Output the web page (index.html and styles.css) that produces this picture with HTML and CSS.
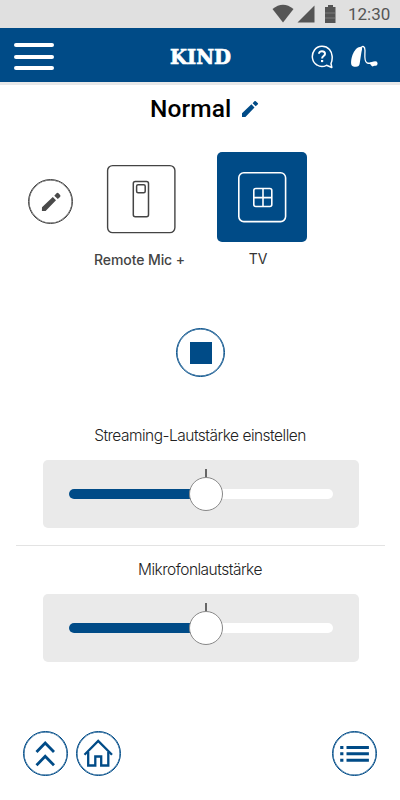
FILE: index.html
```html
<!DOCTYPE html>
<html lang="de">
<head>
    <meta charset="UTF-8">
    <meta name="viewport" content="width=device-width, initial-scale=1.0">
    <title>KIND</title>
    <link rel="stylesheet" href="styles.css">
</head>
<body>
    <div class="status-bar">
        <svg width="66" height="20" viewBox="0 0 66 20" fill="#555">
            <path d="M.5 5Q11 -3.500 21.500 5L11 18.500Z"/>
            <path d="M42.500 1.500V18.500H25.500Z"/>
            <path d="M56 1h5v2h2.500v16h-10.500V3H56Z"/>
            <path d="M53 9h10.500M53 14h10.500" stroke="#999" stroke-width=".6"/>
        </svg>
        <span class="clock">12:30</span>
    </div>
    <header class="header">
        <button class="menu" aria-label="Menü"><span></span><span></span><span></span></button>
        <svg class="logo" width="64" height="30" viewBox="0 0 64 30">
            <text x="1" y="24" textLength="61" lengthAdjust="spacingAndGlyphs">KIND</text>
        </svg>
        <div class="header-icons">
            <svg width="22" height="24" viewBox="0 0 22 24" fill="none" stroke="#fff" stroke-width="1.500" stroke-linejoin="round">
                <path d="M20 18.500C22 14 21.500 8 18.500 4.500C14.500 .2 7 .2 3.500 5C-.2 10 1 17 6 20C9 22 13 21.700 15.500 20.300L20.800 22.500Z"/>
                <path d="M8 8.800C8 5.200 14.200 5.300 14 8.900C13.900 11.100 11.100 11 11.100 13.500" stroke-width="2"/>
                <path d="M11.100 15v2.100" stroke-width="2.200"/>
            </svg>
            <svg width="28" height="24" viewBox="0 0 28 24">
                <path d="M1.300 19.500C.3 13 4.500 1.800 11 1.800C12.800 1.800 12 5 11.300 8L9.700 18.500Q9.200 21.800 6 21.800Q1.800 21.800 1.300 19.500Z" fill="#fff"/>
                <path d="M11 3.200C12.500 0 15 1.500 15 5.500C15 10 13.800 16.500 17 17.800C19 18.700 20.500 18 22.500 18.300" fill="none" stroke="#fff" stroke-width="1.300"/>
                <path d="M20 17.600L23.500 16.500Q27.600 15.500 27.600 18.500Q27.500 21.500 24.500 20.700L22.300 21.500L20.500 19.800Z" fill="#fff"/>
            </svg>
        </div>
    </header>

    <main>
        <div class="title">
            <h1>Normal</h1>
            <svg width="18" height="18" viewBox="0 0 18 18" fill="#004b87">
                <path d="M1 13.300L10.400 4.300L13.500 7.400L4.400 17H1ZM11.600 3.200L13.700 1.100Q14.200 .7 14.800 1.200L16.900 3.200Q17.300 3.800 16.900 4.300L14.700 6.300Z"/>
            </svg>
        </div>

        <div class="programs">
            <button class="circle edit" aria-label="Bearbeiten">
                <svg width="22" height="22" viewBox="0 0 22 22" fill="#4a4a4a">
                    <path d="M2 16.200L12.800 6L16 9.200L5.600 20H1.900ZM14.300 4.700L16.300 2.600Q17.400 1.300 18.500 2.300L20.100 3.900Q21 5 20 6L17.800 7.900Z"/>
                </svg>
            </button>
            <div class="program">
                <div class="tile">
                    <svg width="70" height="70" viewBox="0 0 70 70" fill="none" stroke="#444">
                        <rect x="1.600" y="1.600" width="67.300" height="67" rx="5" stroke-width="1.400"/>
                        <rect x="27.300" y="17.600" width="15.200" height="35.200" rx="2" stroke-width="1.500"/>
                        <rect x="30.600" y="20.700" width="8.600" height="8.100" rx="1.500" stroke-width="1.500"/>
                    </svg>
                </div>
                <span class="label label-mic">Remote Mic +</span>
            </div>
            <div class="program">
                <div class="tile active">
                    <svg width="50" height="52" viewBox="0 0 50 52" fill="none" stroke="#fff" stroke-width="1.600">
                        <rect x="1.800" y="1.800" width="46.800" height="48.800" rx="5"/>
                        <rect x="16.800" y="17.500" width="18" height="18" rx="2"/>
                        <path d="M26 17.500v18M16.800 26.600h18"/>
                    </svg>
                </div>
                <span class="label label-tv">TV</span>
            </div>
        </div>

        <button class="circle stop" aria-label="Stopp"><span></span></button>

        <section class="volume">
            <h2>Streaming-Lautstärke einstellen</h2>
            <div class="slider">
                <div class="track"><div class="fill"></div><div class="knob"></div></div>
            </div>
        </section>
        <hr>
        <section class="volume">
            <h2>Mikrofonlautstärke</h2>
            <div class="slider">
                <div class="track"><div class="fill"></div><div class="knob"></div></div>
            </div>
        </section>
    </main>

    <footer class="footer">
        <button class="circle" aria-label="Nach oben">
            <svg width="45" height="45" viewBox="0 0 45 45" fill="none" stroke="#004b87" stroke-width="2.800">
                <path d="M13.500 21L22.200 12L31 21M13.500 34.300L22.200 25.300L31 34.300"/>
            </svg>
        </button>
        <button class="circle" aria-label="Start">
            <svg width="45" height="45" viewBox="0 0 45 45" fill="none" stroke="#004b87" stroke-width="2.300">
                <path d="M8.500 23.800L22.200 10L36 23.800"/>
                <path d="M12.200 21V34.500H19.300V25.500H25.200V34.500H32.300V21"/>
            </svg>
        </button>
        <button class="circle list" aria-label="Liste">
            <svg width="45" height="45" viewBox="0 0 45 45" fill="#004b87">
                <path d="M8.200 15h3.200v3H8.200ZM14.500 15h22.400v3H14.500ZM8.200 21.300h3.200v3H8.200ZM14.500 21.300h22.400v3H14.500ZM8.200 27.700h3.200v3H8.200ZM14.500 27.700h22.400v3H14.500Z"/>
            </svg>
        </button>
    </footer>
</body>
</html>
```
FILE: styles.css
```css
* {
    box-sizing: border-box;
}
body {
    margin: 0;
    height: 800px;
    background-color: #fff;
    font-family: Inter, Roboto, sans-serif;
    overflow: hidden;
}
button {
    padding: 0;
    border: none;
    background: none;
}
svg {
    display: block;
    flex: none;
}
.status-bar {
    height: 28px;
    display: flex;
    justify-content: flex-end;
    align-items: center;
    padding: 0 10px 0 0;
    background-color: #e0e0e0;
}
.clock {
    width: 42px;
    margin-left: 10px;
    padding-bottom: 1px;
    font: 17px/26px Roboto, sans-serif;
    color: #555;
    white-space: nowrap;
}
.header {
    height: 57px;
    display: grid;
    grid-template-columns: 155px 64px 1fr;
    align-items: center;
    padding: 0 22px 0 14px;
    background-color: #004b87;
    border-bottom: 3px solid #e8e8e8;
}
.menu {
    width: 40px;
    display: grid;
    gap: 7.500px;
    padding-top: 3px;
}
.menu span {
    height: 4px;
    border-radius: 2px;
    background-color: #fff;
}
.logo text {
    font: bold 20.500px "DejaVu Serif", serif;
    fill: #fff;
    stroke: #fff;
    stroke-width: .7px;
}
.header-icons {
    display: flex;
    justify-content: flex-end;
    gap: 17px;
    padding-top: 4px;
}
.title {
    height: 67px;
    display: flex;
    padding: 7px 0 0 150px;
}
.title h1 {
    width: 91px;
    margin: 0;
    font: 500 24.500px/34px Roboto, sans-serif;
    letter-spacing: .1px;
    color: #000;
}
.title svg {
    margin-top: 8px;
}
.programs {
    height: 176px;
    display: flex;
    padding-left: 28px;
}
.circle {
    width: 45px;
    height: 45px;
    display: flex;
    flex: none;
    align-items: center;
    justify-content: center;
    border: 1px solid #004b87;
    border-radius: 50%;
    box-shadow: inset 0 0 0 .5px #004b87;
}
.edit {
    margin-top: 27px;
    border-color: #444;
    box-shadow: inset 0 0 0 .5px #444;
}
.program {
    width: 90px;
    display: flex;
    flex-direction: column;
    align-items: center;
}
.edit + .program {
    margin: 0 31px 0 23px;
}
.tile {
    width: 90px;
    height: 90px;
    display: flex;
    align-items: center;
    justify-content: center;
    padding-top: 3px;
}
.tile.active {
    padding: 0;
    border-radius: 5px;
    background-color: #004b87;
}
.label {
    margin-top: 8px;
    font-size: 14px;
    line-height: 20px;
    color: #444;
    white-space: nowrap;
}
.label-mic {
    margin-right: 3px;
    font-weight: 500;
    letter-spacing: -.1px;
}
.label-tv {
    margin: 7px 8px 0 0;
    color: #333;
}
.stop {
    width: 49px;
    height: 49px;
    margin: 0 0 44px 176px;
}
.stop span {
    width: 22px;
    height: 22px;
    background-color: #004b87;
}
.volume h2 {
    margin: 0 0 9px;
    font-size: 15.500px;
    font-weight: 300;
    line-height: 30px;
    letter-spacing: -.51px;
    text-align: center;
    color: #222;
}
.slider {
    width: 316px;
    height: 68px;
    margin-left: 43px;
    padding: 29px 26px 0;
    border-radius: 5px;
    background-color: #eaeaea;
}
.track {
    position: relative;
    height: 10px;
    border-radius: 5px;
    background-color: #fff;
}
.fill {
    width: 52%;
    height: 10px;
    border-radius: 5px;
    background-color: #004b87;
}
.knob {
    position: absolute;
    top: -12px;
    left: 120px;
    width: 34px;
    height: 34px;
    border: 1px solid #888;
    border-radius: 50%;
    background-color: #fff;
}
.knob::before {
    content: "";
    position: absolute;
    top: -9px;
    left: 15px;
    width: 2px;
    height: 8px;
    background-color: #666;
}
hr {
    height: 1px;
    margin: 17px 15px 9px 16px;
    border: none;
    background-color: #e3e3e3;
}
.footer {
    display: flex;
    gap: 8px;
    margin-top: 69px;
    padding: 0 23px;
}
.list {
    margin-left: auto;
}
```
